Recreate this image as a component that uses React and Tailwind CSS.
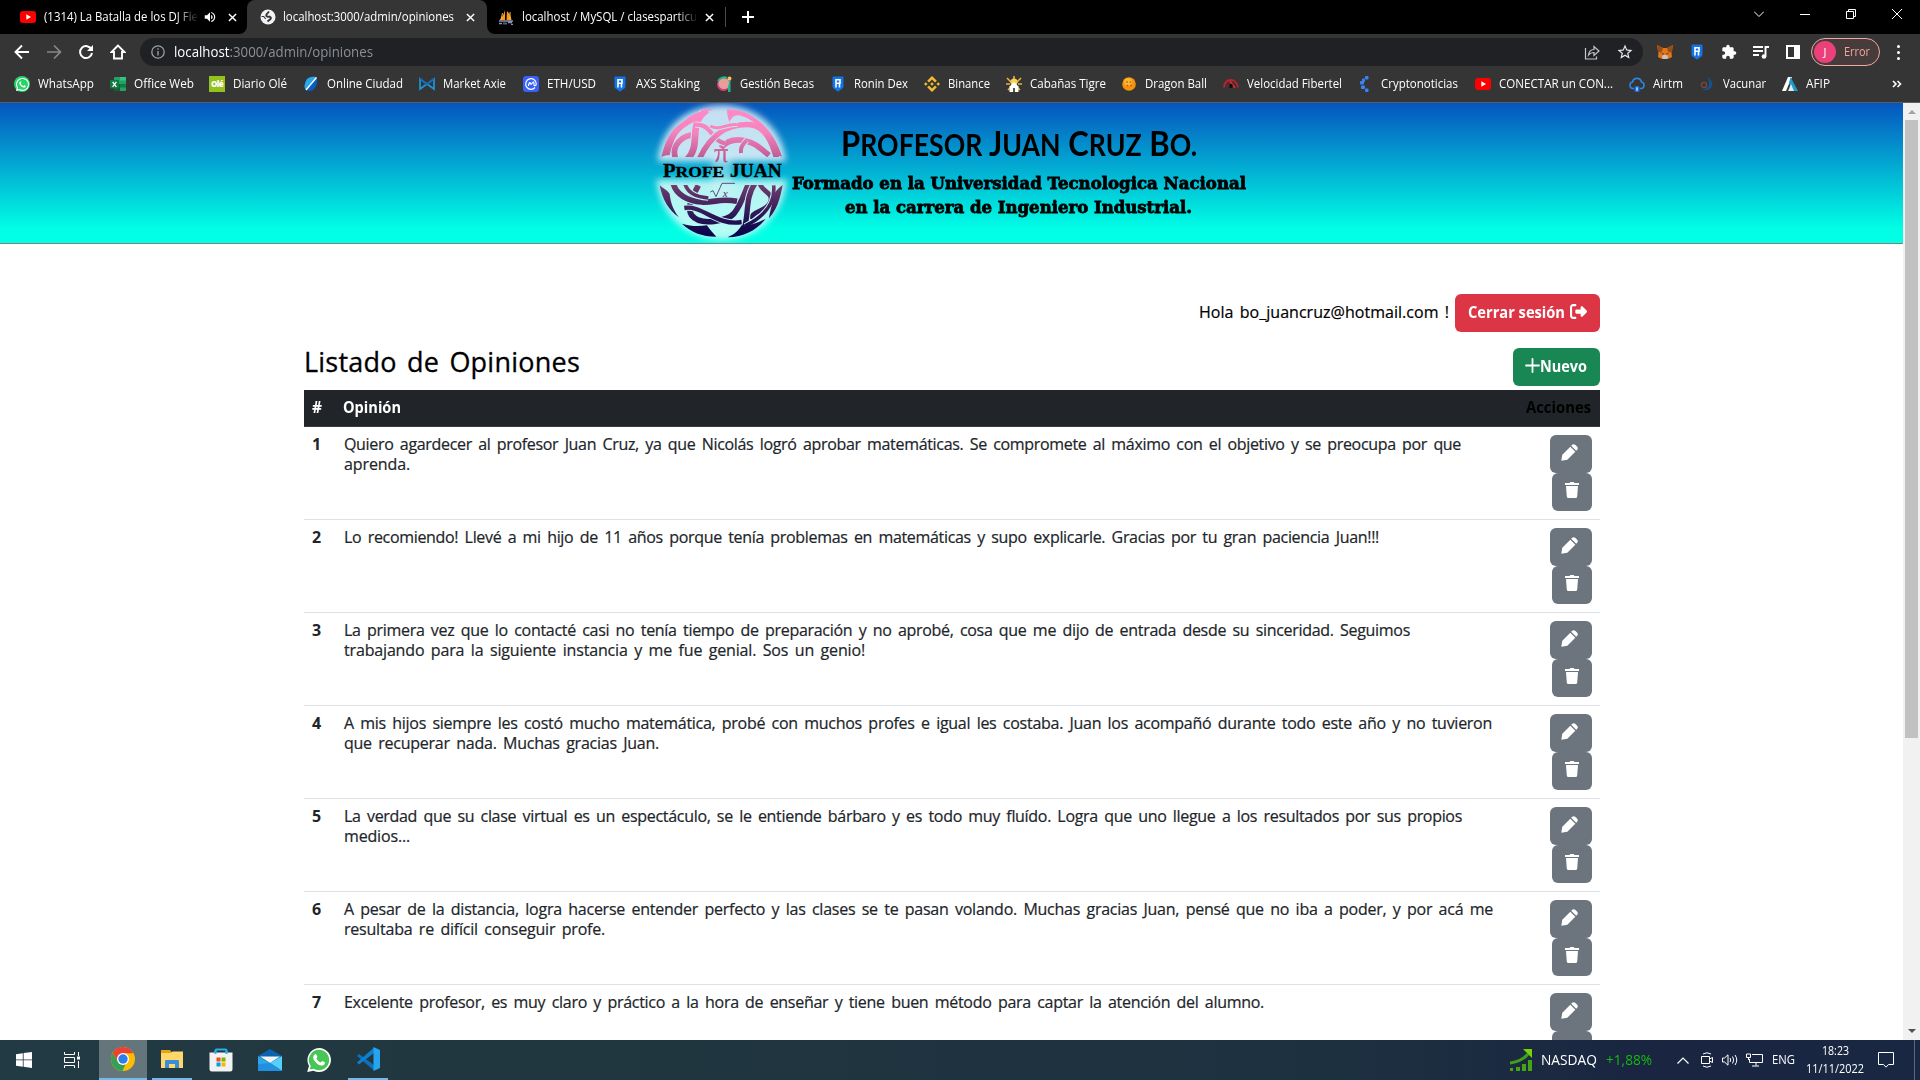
import React, { useLayoutEffect, useRef } from "react";
import { FaRightFromBracket, FaPlus } from "react-icons/fa6";
import { FaWhatsapp } from "react-icons/fa";
import { MdExtension, MdStarOutline, MdVolumeUp } from "react-icons/md";

/* Fits one line of text to the width of its box, by tracking or by horizontal scale. */
function Fit({ className = "", scale = false, children }) {
  const outer = useRef(null);
  const inner = useRef(null);
  useLayoutEffect(() => {
    const box = outer.current;
    const el = inner.current;
    const target = box.clientWidth;
    const natural = el.getBoundingClientRect().width;
    if (!natural) return;
    if (scale) {
      el.style.transform = `scaleX(${target / natural})`;
    } else {
      const n = el.textContent.length;
      el.style.letterSpacing = `${(target - natural) / n}px`;
    }
  }, [scale]);
  return (
    <span ref={outer} className={`block shrink-0 whitespace-nowrap ${className}`}>
      <span ref={inner} className="inline-block origin-left">{children}</span>
    </span>
  );
}

const UI = "font-['Open_Sans','Noto_Sans',sans-serif]";

/* ---------- small icons ---------- */
const YouTube = () => (
  <svg viewBox="0 0 16 16" className="h-4 w-4"><rect y="2" width="16" height="12" rx="3" fill="#f00" /><path d="M6.3 5.2 11 8l-4.7 2.8z" fill="#fff" /></svg>
);
const Globe = () => (
  <svg viewBox="0 0 16 16" className="h-4 w-4"><circle cx="8" cy="8" r="7.5" fill="#f1f3f4" /><path d="M9 2.500 6.500 5.500q-1 2 1.500 2.300h2q1.500.7.5 2.200L7.500 12.500" fill="none" stroke="#35363a" strokeWidth="1.900" /><path d="M1.500 7.500h2.200l2 2.500" fill="none" stroke="#35363a" strokeWidth="1.200" /></svg>
);
const Sails = () => (
  <svg viewBox="0 0 16 16" className="h-4 w-4"><path d="M7 1v10H1.500C4 8.500 6 5 7 1z" fill="#f89c0e" /><path d="M9 2c2.500 2.500 4 5.500 4.500 9H8.500z" fill="#f89c0e" /><path d="M4.500 4 3 11M12 3v8" stroke="#f8b84e" /><path d="M1 12h14M1 14.500h3m2-1v2m2-2v2m2-2h4m-1 2h2" stroke="#8c8fb5" strokeWidth="1.3" /></svg>
);
const Cross = () => (
  <svg viewBox="0 0 10 10" className="h-[9px] w-[9px] shrink-0"><path d="m1 1 8 8m0-8L1 9" stroke="#fff" strokeWidth="1.6" /></svg>
);
const Ronin = () => (
  <svg viewBox="0 0 16 16" className="h-4 w-4"><path d="M2.500 1.500Q2.500.5 3.500.5h9q1 0 1 1v9.300c0 1.500-3 3-5.500 4.900-2.500-1.900-5.500-3.400-5.500-4.900z" fill="#1273ea" /><path d="M6 11.500V3.700h4v3.600H6.500M9.500 7.500v4" fill="none" stroke="#fff" strokeWidth="1.6" /></svg>
);
const WhatsAppIcon = () => (
  <span className="flex h-4 w-4 items-center justify-center rounded-full bg-[#25d366]"><FaWhatsapp className="h-[15px] w-[15px] text-white" /></span>
);
const Excel = () => (
  <svg viewBox="0 0 16 16" className="h-4 w-4"><rect x="4" y="1" width="12" height="14" rx="1" fill="#21a366" /><path d="M10 1h6v3.500h-6z" fill="#33c481" /><path d="M4 8h6v7H5q-1 0-1-1z" fill="#185c37" /><path d="M10 8h6v3.500h-6z" fill="#107c41" /><rect y="4" width="9" height="8.500" rx="1" fill="#107c41" /><path d="m2.600 5.800 3.800 5m0-5-3.800 5" stroke="#fff" strokeWidth="1.300" /></svg>
);
const Ole = () => (
  <span className="flex h-4 w-4 items-center justify-center bg-[#95c11f] font-['Open_Sans',sans-serif] text-[8px] font-extrabold tracking-[-0.6px] text-white">Olé</span>
);
const Ciudad = () => (
  <svg viewBox="0 0 16 16" className="h-4 w-4"><path d="M8 1c4-1 7 1 6 6s-4 8-7 8-6-2-5-7 3-6 6-7z" fill="#0a5cc0" /><path d="M8 1c3-.8 5-.2 5.800 1L3 14C1 12 1.500 9 2 8c1-5 3-6 6-7z" fill="#29a9ea" /><path d="M13.500 1.500 3 14" stroke="#fff" strokeWidth="1.300" /></svg>
);
const Axie = () => (
  <svg viewBox="0 0 16 16" className="h-4 w-4"><path d="M1 3v10l7-5zM15 3v10L8 8z" fill="none" stroke="#1b96d8" strokeWidth="1.700" /><path d="m1 3 7 5 7-5" fill="none" stroke="#1265b8" strokeWidth="1.500" /></svg>
);
const Cmc = () => (
  <svg viewBox="0 0 16 16" className="h-4 w-4"><rect width="16" height="16" rx="3" fill="#3861fb" /><path d="M12 11.500a5.300 5.300 0 1 1 1.300-3.500c0 2-2.300 2.300-2.300.5 0-3-1-3-2.300-.8-.8 1.500-1.300 0-1.300-.7-.8-1-1.600.5-2 3" fill="none" stroke="#fff" strokeWidth="1.200" /></svg>
);
const Becas = () => (
  <svg viewBox="0 0 16 16" className="h-4 w-4"><circle cx="7.500" cy="8.500" r="6.500" fill="#d8407d" /><circle cx="8" cy="7.500" r="5.500" fill="#e79d9a" /><path d="M2 5a7 7 0 0 1 9-3" stroke="#1db58e" strokeWidth="2" fill="none" /><path d="M14 4v12h-1.500V12z" fill="#1db58e" stroke="#1db58e" /><circle cx="13.500" cy="2.500" r="2" fill="#f6c15b" /></svg>
);
const Binance = () => (
  <svg viewBox="0 0 16 16" className="h-4 w-4" fill="#f3ba2f"><path d="m8 0 4.800 4.800L11 6.600l-3-3-3 3-1.800-1.800zM8 16l4.800-4.800L11 9.400l-3 3-3-3-1.800 1.800zM1.800 6.200 3.600 8 1.800 9.800 0 8zM14.200 6.200 16 8l-1.800 1.800L12.400 8zM8 6.200 9.800 8 8 9.800 6.200 8z" /></svg>
);
const Cabanas = () => (
  <svg viewBox="0 0 16 16" className="h-4 w-4"><path d="M8 0v6M1 2l4 4M15 2l-4 4M0 8h4M16 8h-4M2 14l3-3M14 14l-3-3" stroke="#eab33a" strokeWidth="1.600" /><circle cx="8" cy="6" r="3.600" fill="#f4d35c" /><path d="m8 6 4.500 4.500V16h-9v-5.500z" fill="#fff" /><path d="M7 12h2v4H7z" fill="#554" /></svg>
);
const Dragon = () => (
  <svg viewBox="0 0 16 16" className="h-4 w-4"><circle cx="8" cy="8" r="6.800" fill="#f5930b" /><circle cx="7" cy="6" r="4" fill="#fbb531" /><g fill="#c2410c"><circle cx="6" cy="6" r=".8" /><circle cx="9.500" cy="6" r=".8" /><circle cx="6.500" cy="9.500" r=".8" /><circle cx="10" cy="9.500" r=".8" /></g></svg>
);
const Speed = () => (
  <svg viewBox="0 0 16 16" className="h-4 w-4" fill="none" stroke="#c8202c"><path d="M1 11.500C1 2.500 13 .5 15 11.500" strokeWidth="1.800" /><path d="M4.500 11c0-4 5.500-5 7.500 0" stroke="#8d1820" strokeWidth="1.300" /><path d="m7 5 5 7" stroke="#e02b35" strokeWidth="1.500" /><path d="M6.500 8h3v4h-3z" fill="#111" stroke="none" /></svg>
);
const Crypto = () => (
  <svg viewBox="0 0 16 16" className="h-4 w-4" fill="#3b82f6"><rect x="8" y="0" width="3.500" height="3.500" rx="1" /><rect x="5" y="2.500" width="3" height="3.500" rx="1" /><rect x="3" y="5" width="4" height="3.500" rx="1" /><rect x="4" y="9.500" width="4" height="3.500" rx="1" /><rect x="8" y="12.500" width="3.500" height="3.500" rx="1" /></svg>
);
const Airtm = () => (
  <svg viewBox="0 0 16 16" className="h-4 w-4"><path d="M5 12.500H4a3.300 3.300 0 0 1-.5-6.500 4.600 4.600 0 0 1 9 0 3.300 3.300 0 0 1-.5 6.500h-1" fill="none" stroke="#2a86e0" strokeWidth="1.600" /><rect x="5.500" y="10" width="5" height="6" rx="1.500" fill="#1d6fd8" /><path d="M8 11v4M7 13h2" stroke="#bfe0ff" /></svg>
);
const Vacunar = () => (
  <svg viewBox="0 0 16 16" className="h-4 w-4"><path d="M8 1c5 3 7 7 4 11-2.500 3-7 2.500-9 1 5 0 7-2 7-6 0-2-1-4-2-6z" fill="#15508f" /><circle cx="5" cy="9" r="2.600" fill="none" stroke="#7c4a3c" strokeWidth="1.300" /></svg>
);
const Afip = () => (
  <svg viewBox="0 0 16 16" className="h-4 w-4"><path d="M6 1h4L4 15H0z" fill="#fff" /><path d="m8.500 1 7.500 14h-5.500L7 7z" fill="#1f9ac9" /><path d="m9 8 3 7H6z" fill="#d8eef7" /></svg>
);
const Fox = () => (
  <svg viewBox="0 0 16 16" className="h-4 w-4"><path d="m0 1 6 3h4l6-3-1.500 8 .5 4-4 2H5l-4-2 .5-4z" fill="#e2761b" /><path d="m0 1 6 3-1.500 4.500L1 8zM16 1l-6 3 1.500 4.500L15 8z" fill="#9a4d18" /><path d="m5 13 1-2h4l1 2-1 2H6z" fill="#c9c3bd" /><path d="m4 9 2.500.5.5 1.500zM12 9l-2.500.5L9 11z" fill="#233447" /></svg>
);

const BOOKMARKS = [
  ["WhatsApp", WhatsAppIcon, "w-[96px]", "w-[56px]"],
  ["Office Web", Excel, "w-[99px]", "w-[60px]"],
  ["Diario Olé", Ole, "w-[94px]", "w-[54px]"],
  ["Online Ciudad", Ciudad, "w-[116px]", "w-[76px]"],
  ["Market Axie", Axie, "w-[104px]", "w-[63px]"],
  ["ETH/USD", Cmc, "w-[89px]", "w-[49px]"],
  ["AXS Staking", Ronin, "w-[104px]", "w-[64px]"],
  ["Gestión Becas", Becas, "w-[114px]", "w-[74px]"],
  ["Ronin Dex", Ronin, "w-[94px]", "w-[54px]"],
  ["Binance", Binance, "w-[82px]", "w-[42px]"],
  ["Cabañas Tigre", Cabanas, "w-[115px]", "w-[76px]"],
  ["Dragon Ball", Dragon, "w-[102px]", "w-[62px]"],
  ["Velocidad Fibertel", Speed, "w-[134px]", "w-[95px]"],
  ["Cryptonoticias", Crypto, "w-[118px]", "w-[77px]"],
  ["CONECTAR un CON...", YouTube, "w-[154px]", "w-[114px]"],
  ["Airtm", Airtm, "w-[70px]", "w-[30px]"],
  ["Vacunar", Vacunar, "w-[83px]", "w-[43px]"],
  ["AFIP", Afip, "w-[60px]", "w-[24px]"],
];

const ROWS = [
  [["Quiero agardecer al profesor Juan Cruz, ya que Nicolás logró aprobar matemáticas. Se compromete al máximo con el objetivo y se preocupa por que", "w-[1117px]"], ["aprenda.", "w-[66px]"]],
  [["Lo recomiendo! Llevé a mi hijo de 11 años porque tenía problemas en matemáticas y supo explicarle. Gracias por tu gran paciencia Juan!!!", "w-[1035px]"]],
  [["La primera vez que lo contacté casi no tenía tiempo de preparación y no aprobé, cosa que me dijo de entrada desde su sinceridad. Seguimos", "w-[1066px]"], ["trabajando para la siguiente instancia y me fue genial. Sos un genio!", "w-[521px]"]],
  [["A mis hijos siempre les costó mucho matemática, probé con muchos profes e igual les costaba. Juan los acompañó durante todo este año y no tuvieron", "w-[1148px]"], ["que recuperar nada. Muchas gracias Juan.", "w-[315px]"]],
  [["La verdad que su clase virtual es un espectáculo, se le entiende bárbaro y es todo muy fluído. Logra que uno llegue a los resultados por sus propios", "w-[1118px]"], ["medios...", "w-[66px]"]],
  [["A pesar de la distancia, logra hacerse entender perfecto y las clases se te pasan volando. Muchas gracias Juan, pensé que no iba a poder, y por acá me", "w-[1149px]"], ["resultaba re difícil conseguir profe.", "w-[261px]"]],
  [["Excelente profesor, es muy claro y práctico a la hora de enseñar y tiene buen método para captar la atención del alumno.", "w-[920px]"]],
];

function TabStrip() {
  return (
    <div className="flex h-[34px] items-center bg-black text-[12px] text-white">
      <div className="flex h-full w-[239px] items-center pl-5">
        <YouTube />
        <div className="ml-2 w-[155px] overflow-hidden [mask-image:linear-gradient(to_right,black_85%,transparent)]">
          <Fit scale className="w-[154px]">(1314) La Batalla de los DJ Fie</Fit>
        </div>
        <MdVolumeUp className="ml-1 h-[14px] w-[14px]" />
        <div className="ml-[11px]"><Cross /></div>
      </div>
      <div className="h-full w-2 bg-[#353535]"><div className="h-full w-full rounded-br-lg bg-black" /></div>
      <div className="flex h-full w-[240px] items-center rounded-t-lg bg-[#353535] pl-[13px]">
        <Globe />
        <Fit scale className="ml-[7px] w-[171px]">localhost:3000/admin/opiniones</Fit>
        <div className="ml-[12px]"><Cross /></div>
      </div>
      <div className="h-full w-2 bg-[#353535]"><div className="h-full w-full rounded-bl-lg bg-black" /></div>
      <div className="flex h-full w-[230px] items-center pl-[3px]">
        <Sails />
        <div className="ml-2 w-[176px] overflow-hidden [mask-image:linear-gradient(to_right,black_88%,transparent)]">
          <Fit scale className="w-[175px]">localhost / MySQL / clasesparticu</Fit>
        </div>
        <div className="ml-[7px]"><Cross /></div>
      </div>
      <div className="h-5 w-px bg-[#4a4a4a]" />
      <svg viewBox="0 0 12 12" className="ml-4 h-3 w-3"><path d="M6 0v12M0 6h12" stroke="#fff" strokeWidth="2" /></svg>
      <div className="mr-[18px] ml-auto flex items-center gap-9 pb-[6px]">
        <svg viewBox="0 0 10 10" className="h-[10px] w-[10px]"><path d="m0 2.500 5 5 5-5" stroke="#fff" fill="none" /></svg>
        <svg viewBox="0 0 10 10" className="h-[10px] w-[10px]"><path d="M0 5.500h10" stroke="#fff" /></svg>
        <svg viewBox="0 0 10 10" className="h-[10px] w-[10px]"><path d="M.5 2.500h7v7h-7zM2.500 2.500v-2h7v7h-2" stroke="#fff" fill="none" /></svg>
        <svg viewBox="0 0 10 10" className="h-[10px] w-[10px]"><path d="m0 0 10 10M10 0 0 10" stroke="#fff" /></svg>
      </div>
    </div>
  );
}

function Toolbar() {
  return (
    <div className="flex h-9 items-center bg-[#353535] pl-[14px] text-white">
      <svg viewBox="0 0 16 16" className="h-4 w-4"><path d="M15 8H2M8 1.500 1.500 8 8 14.500" stroke="#fff" strokeWidth="1.900" fill="none" /></svg>
      <svg viewBox="0 0 16 16" className="ml-4 h-4 w-4"><path d="M1 8h13M8 1.500 14.500 8 8 14.500" stroke="#888" strokeWidth="1.700" fill="none" /></svg>
      <svg viewBox="0 0 16 16" className="ml-4 h-4 w-4"><path d="M13.500 5.500A6 6 0 1 0 14 9" stroke="#fff" strokeWidth="2" fill="none" /><path d="M15 1v6H9z" fill="#fff" /></svg>
      <svg viewBox="0 0 16 16" className="ml-4 h-4 w-4"><path d="M8 1.500 1.500 8H4v6.500h8V8h2.500z" stroke="#fff" strokeWidth="1.900" fill="none" /></svg>
      <div className="ml-[14px] flex h-7 w-[1503px] items-center rounded-full bg-[#202124] pl-[11px]">
        <svg viewBox="0 0 14 14" className="h-[14px] w-[14px]"><circle cx="7" cy="7" r="6.200" fill="none" stroke="#9aa0a6" strokeWidth="1.300" /><path d="M7 6v4.500M7 3.300v1.500" stroke="#9aa0a6" strokeWidth="1.400" /></svg>
        <Fit scale className="ml-[9px] w-[199px] pb-px text-[14px] text-[#8b9095]"><span className="text-white">localhost</span>:3000/admin/opiniones</Fit>
        <svg viewBox="0 0 16 16" className="mr-4 ml-auto h-4 w-4"><path d="M1.500 4v11h11v-2.500" fill="none" stroke="#c8c8c8" strokeWidth="1.200" /><path d="M4.500 11c.5-4 2.500-5.500 5.500-5.500V2.500l5 4.500-5 4.500V8.500c-2.500 0-4 .5-5.500 2.500z" fill="none" stroke="#c8c8c8" strokeWidth="1.200" /></svg>
        <MdStarOutline className="mr-[9px] h-[18px] w-[18px] text-[#e8e8e8]" />
      </div>
      <div className="ml-[14px] flex items-center gap-4">
        <Fox />
        <Ronin />
        <MdExtension className="h-4 w-4" />
        <svg viewBox="0 0 16 16" className="h-4 w-4"><path d="M0 3h10M0 7h10M0 11h6" stroke="#fff" strokeWidth="1.900" /><path d="M12.500 12.500V3H16" fill="none" stroke="#fff" strokeWidth="1.900" /><circle cx="11" cy="12.500" r="2.300" fill="#fff" /></svg>
        <svg viewBox="0 0 16 16" className="h-4 w-4"><path d="M2 2h12v12H2z" fill="none" stroke="#fff" strokeWidth="2" /><path d="M9 2h5v12H9z" fill="#fff" /></svg>
      </div>
      <div className="ml-[10px] flex h-7 w-[69px] items-center rounded-full border border-[#f1a9a0] bg-[#453c3b] pl-0.5 text-[12px] text-[#f3a79f]">
        <span className="flex h-[22px] w-[22px] items-center justify-center rounded-full bg-[#ec407a] text-[11px] text-white">J</span>
        <Fit scale className="ml-2 w-[26px]">Error</Fit>
      </div>
      <div className="ml-[17px] flex flex-col gap-[3px]">
        <i className="h-[3px] w-[3px] rounded-full bg-white" /><i className="h-[3px] w-[3px] rounded-full bg-white" /><i className="h-[3px] w-[3px] rounded-full bg-white" />
      </div>
    </div>
  );
}

function Bookmarks() {
  return (
    <div className="flex h-[33px] items-center border-b border-[#5d5d5d] bg-[#353535] pb-[4px] pl-[14px] text-[12px] text-white">
      {BOOKMARKS.map(([label, Icon, box, text]) => (
        <div key={label} className={`flex shrink-0 items-center gap-2 ${box}`}>
          <span className="shrink-0"><Icon /></span>
          <Fit scale className={text}>{label}</Fit>
        </div>
      ))}
      <svg viewBox="0 0 10 10" className="mr-[18px] ml-auto h-[10px] w-[10px]"><path d="m1 2 3 3-3 3M5.500 2l3 3-3 3" fill="none" stroke="#fff" strokeWidth="1.600" /></svg>
    </div>
  );
}

/* A woven ribbon: a pale edge under a coloured band, so crossings read as over and under. */
function Band({ d, w, edge, ink }) {
  return (
    <g fill="none">
      <path d={d} stroke={edge} strokeWidth={w + 6} />
      <path d={d} stroke={`url(#${ink})`} strokeWidth={w} />
    </g>
  );
}

function Logo() {
  return (
    <svg viewBox="0 15 450 420" className="h-[140px] w-[150px] shrink-0">
      <defs>
        <linearGradient id="pink" gradientUnits="userSpaceOnUse" x1="0" y1="30" x2="0" y2="195"><stop offset="0" stopColor="#ff8ac8" /><stop offset=".45" stopColor="#f583bd" /><stop offset="1" stopColor="#b0548c" /></linearGradient>
        <linearGradient id="plum" gradientUnits="userSpaceOnUse" x1="0" y1="255" x2="0" y2="420"><stop offset="0" stopColor="#74406f" /><stop offset=".6" stopColor="#2a1655" /><stop offset="1" stopColor="#04004a" /></linearGradient>
        <filter id="glow" x="-20%" y="-20%" width="140%" height="140%"><feGaussianBlur stdDeviation="9" /></filter>
        <clipPath id="upper"><path d="M40 178C55 85 130 28 230 28s172 60 184 150z" /></clipPath>
        <clipPath id="lower"><path d="M40 261h376C405 350 340 420 230 420S52 350 40 261z" /></clipPath>
      </defs>
      <g filter="url(#glow)">
        <path d="M38 190C45 95 120 22 230 22s185 75 192 168z" fill="#d9edf7" fillOpacity=".9" />
        <path d="M34 245h392C415 345 345 425 232 425S45 345 34 245z" fill="#d5fbf8" fillOpacity=".85" />
        <path d="M200 170h60v130h-60z" fill="#cfeff5" fillOpacity=".5" />
      </g>
      <g clipPath="url(#upper)">
        <Band d="M228 150C245 128 270 122 300 128S345 150 372 172" w={17} edge="#c9e2f0" ink="pink" />
        <Band d="M92 182C78 145 108 108 158 110" w={17} edge="#c9e2f0" ink="pink" />
        <Band d="M127 184C172 140 125 78 186 36" w={20} edge="#c9e2f0" ink="pink" />
        <Band d="M150 80C205 78 195 128 240 136" w={13} edge="#c9e2f0" ink="pink" />
        <Band d="M160 190C200 95 265 76 318 80C362 88 382 130 396 186" w={17} edge="#c9e2f0" ink="pink" />
        <Band d="M288 165C285 148 292 138 306 126" w={12} edge="#c9e2f0" ink="pink" />
        <Band d="M196 84C226 100 240 76 278 80" w={9} edge="#c9e2f0" ink="pink" />
      </g>
      <g fill="url(#pink)">
        <path d="M49 177C62 122 80 96 106 77C132 62 135 42 215 30C175 42 165 56 142 74C108 92 88 108 74 172C64 171 58 173 49 177z" />
        <path d="M246 34c36 0 57 8 89 30 38 28 62 65 76 112-10-4-18-3-24-2-4-38-22-62-48-90-24-22-40-28-58-32-14-2-22 8-28 20-4-12-8-26-7-38z" />
        <path d="M208 153h41v6h-7v26c0 5 4 5 7 3-3 8-14 7-14-2v-27h-11c0 14-1 26-6 31-5 5-10 0-5-5 5-5 6-15 6-26-6 0-8 1-11 5z" />
      </g>
      <g clipPath="url(#lower)">
        <Band d="M160 262C140 300 125 330 140 352C165 385 250 370 268 345C290 318 300 280 314 250" w={17} edge="#bdf3f3" ink="plum" />
        <Band d="M84 254C92 290 130 310 170 312S225 300 276 310" w={17} edge="#bdf3f3" ink="plum" />
        <Band d="M345 254C345 280 388 282 376 312S325 335 316 362" w={14} edge="#bdf3f3" ink="plum" />
        <Band d="M118 330C170 320 215 385 290 372" w={13} edge="#bdf3f3" ink="plum" />
        <Band d="M330 256C300 300 312 345 298 392" w={16} edge="#bdf3f3" ink="plum" />
        <Band d="M386 262C392 320 350 360 300 384" w={11} edge="#bdf3f3" ink="plum" />
        <Band d="M118 252C126 284 150 296 190 300" w={11} edge="#bdf3f3" ink="plum" />
      </g>
      <g fill="url(#plum)">
        <path d="M44 262c15 12 26 18 30 26 3 27 11 49 28 70-31-21-50-54-58-96z" />
        <path d="M413 261c-11 57-20 74-41 100 4-28 11-44 12-63 4-14 12-24 29-37z" />
        <path d="M111 377c26 8 50 8 75 5 8 12 17 22 28 34-43 0-77-14-103-39z" />
        <path d="M248 418c20-9 32-19 42-36 25 2 45-6 72-20-23 32-64 56-114 56z" />
      </g>
      <path d="m196 282 8-4 9 18 18-40h39" fill="none" stroke="#3a3662" strokeWidth="2.500" />
      <text x="233" y="297" fill="#4b3a70" className="font-['Liberation_Serif',serif] text-[34px] italic">x</text>
      <g fill="#000" stroke="#000" strokeWidth="1" className="font-['Liberation_Serif',serif] font-bold">
        <text x="54" y="237" textLength="184" lengthAdjust="spacingAndGlyphs" className="text-[54px]">P<tspan className="text-[46px]">ROFE</tspan></text>
        <text x="255" y="237" textLength="155" lengthAdjust="spacingAndGlyphs" className="text-[54px]">JUAN</text>
      </g>
    </svg>
  );
}

function Hero() {
  return (
    <header className="flex h-[141px] border-b border-[#808080] bg-[linear-gradient(to_bottom,#0655bf_0%,#00ffe5_90%)] pl-[645px] text-black">
      <Logo />
      <div className="-ml-[3px] flex w-[453px] flex-col items-center pt-[15px]">
        <Fit scale className="h-12 w-[356px] font-[Lato,sans-serif] text-[35px] leading-[48px] font-bold">
          P<span className="text-[30px]">ROFESOR</span> J<span className="text-[30px]">UAN</span> C<span className="text-[30px]">RUZ</span> B<span className="text-[30px]">O.</span>
        </Fit>
        <Fit scale className="mt-[5px] h-6 w-[454px] font-['DejaVu_Serif',serif] text-[17px] leading-6 font-bold [-webkit-text-stroke:0.8px_black]">Formado en la Universidad Tecnologica Nacional</Fit>
        <Fit scale className="h-6 w-[347px] font-['DejaVu_Serif',serif] text-[17px] leading-6 font-bold [-webkit-text-stroke:0.8px_black]">en la carrera de Ingeniero Industrial.</Fit>
      </div>
    </header>
  );
}

function Row({ n, lines }) {
  return (
    <div className="flex h-[93px] shrink-0 border-b border-[#dee2e6] pt-[7px] text-[#212529]">
      <div className="w-[40px] pl-2 leading-5 font-bold">{n}</div>
      <div className="flex-1 font-medium [word-spacing:2.5px] [-webkit-text-stroke:0.2px_#212529]">
        {lines.map(([t, w]) => <Fit key={t} className={`h-5 leading-5 ${w}`}>{t}</Fit>)}
      </div>
      <div className="mt-px mr-2 flex flex-col items-end">
        <div className="flex h-[38px] w-[42px] items-center justify-center rounded-md bg-[#6c757d] pr-1 pb-[4px] text-white">
          <svg viewBox="0 0 17 17" className="h-[17px] w-[17px]" fill="#fff"><path d="m1.300 10.700 8-8 5 5-8 8L.3 16.800z" /><path d="m10.200 1.800 1-1q1.500-1.300 3 0l2 2q1.200 1.500 0 3l-1 1z" /></svg>
        </div>
        <div className="flex h-[38px] w-10 items-center justify-center rounded-md bg-[#6c757d] pb-1 text-white">
          <svg viewBox="0 0 14 16" className="h-4 w-[14px]" fill="#fff"><path d="M0 1h4.500l.8-1h3.400l.8 1H14v2H0zM1 4h12l-.8 10.500Q12 16 10.700 16H3.300Q2 16 1.800 14.500z" /></svg>
        </div>
      </div>
    </div>
  );
}

function Page() {
  return (
    <div className="flex h-[937px] overflow-hidden bg-white">
      <div className="w-[1903px] shrink-0 text-[16px]">
        <Hero />
        <main className="ml-[304px] flex w-[1296px] flex-col pt-[50px]">
          <div className="flex h-[38px] items-center justify-end font-medium text-black">
            <Fit className="mr-[6px] w-[250px] pb-[3px] [word-spacing:2px] [-webkit-text-stroke:0.2px_black]">Hola bo_juancruz@hotmail.com !</Fit>
            <div className="flex h-[38px] w-[145px] items-center rounded-md bg-[#dc3545] pb-[3px] pl-[13px] font-bold text-white">
              <Fit scale className="w-[97px]">Cerrar sesión</Fit>
              <FaRightFromBracket className="ml-[5px] h-[17px] w-[17px]" />
            </div>
          </div>
          <div className="mt-4 flex h-[42px] items-start justify-between">
            <Fit className="w-[276px] text-[27px] leading-[28px] font-medium text-black [word-spacing:3px] [-webkit-text-stroke:0.3px_black]">Listado de Opiniones</Fit>
            <div className="flex h-[38px] w-[87px] items-center rounded-md bg-[#198754] pb-[3px] pl-3 font-bold text-white">
              <svg viewBox="0 0 15 15" className="h-[15px] w-[15px]"><path d="M7.500 1v13M1 7.500h13" stroke="#fff" strokeWidth="1.800" strokeLinecap="round" /></svg>
              <Fit scale className="w-[47px]">Nuevo</Fit>
            </div>
          </div>
          <div className="flex h-[37px] items-center border-b border-[#373b3e] bg-[#212529] pb-[3px] font-bold text-white">
            <Fit scale className="ml-2 w-[10px]">#</Fit>
            <Fit scale className="ml-[21px] w-[58px]">Opinión</Fit>
            <Fit scale className="mr-[9px] ml-auto w-[65px] text-black">Acciones</Fit>
          </div>
          {ROWS.map((lines, i) => <Row key={i} n={i + 1} lines={lines} />)}
        </main>
      </div>
      <div className="flex w-[17px] flex-col items-center justify-between bg-[#f1f1f1]">
        <div className="flex flex-col items-center">
          <svg viewBox="0 0 8 4" className="mt-[7px] mb-[6px] h-1 w-2"><path d="m4 0 4 4H0z" fill="#a3a3a3" /></svg>
          <div className="h-[618px] w-[13px] bg-[#c1c1c1]" />
        </div>
        <svg viewBox="0 0 8 4" className="mb-[7px] h-1 w-2"><path d="m4 4 4-4H0z" fill="#505050" /></svg>
      </div>
    </div>
  );
}

function Taskbar() {
  return (
    <div className="flex h-10 items-center bg-[linear-gradient(to_right,#223a43_0%,#20363f_35%,#1d3040_70%,#1a2641_85%,#1a2742_100%)] text-[12px] text-white">
      <svg viewBox="0 0 16 16" className="ml-4 h-4 w-4" fill="#fff"><path d="m0 2.200 6.800-1v6.300H0zM7.600 1.100 16 0v7.500H7.600zM0 8.300h6.800v6.400L0 13.800zM7.600 8.300H16V16l-8.400-1.200z" /></svg>
      <svg viewBox="0 0 16 16" className="ml-8 h-4 w-4"><path d="M.5 0v2.500h10V0M.5 16v-2.500h10V16M.5 5.500h10v5H.5zM14.500 0v4M14.500 9v7" fill="none" stroke="#fff" /><path d="M13 4.500h3v3h-3z" fill="#fff" /></svg>
      <div className="ml-[19px] flex h-10 w-12 items-center justify-center border-b-2 border-[#76b9ed] bg-[#64757b]">
        <svg viewBox="0 0 24 24" className="h-6 w-6"><circle cx="12" cy="12" r="12" fill="#fbbc04" /><path d="M1.600 6A12 12 0 0 1 22.400 6.200H12L7 15z" fill="#ea4335" /><path d="M1.600 6 7 15l5 2.500 2.500-.5L11.500 24A12 12 0 0 1 1.600 6z" fill="#34a053" /><circle cx="12" cy="12" r="6" fill="#fff" /><circle cx="12" cy="12" r="4.700" fill="#2f7de9" /></svg>
      </div>
      <div className="ml-[5px] flex h-10 w-10 items-center justify-center border-b-2 border-[#76b9ed]">
        <svg viewBox="0 0 22 18" className="h-[18px] w-[22px]"><path d="M0 0h9l1.500 2H22v16H0z" fill="#e8a317" /><path d="M0 3h10l1.500-1.500H22V18H0z" fill="#ffd76b" /><path d="M4 11q0-1 1-1h12q1 0 1 1v7h-4v-4H8v4H4z" fill="#3a8dd6" /></svg>
      </div>
      <svg viewBox="0 0 24 24" className="ml-[17px] h-6 w-6"><path d="M6.500 6V2.500q0-1 1-1h9q1 0 1 1V6" fill="none" stroke="#28aee8" strokeWidth="2" /><path d="M.5 4.500h23V21q0 2.500-2.500 2.500H3Q.5 23.500.5 21z" fill="#f2f2f2" /><path d="M6.500 2.500v3.500M17.500 2.500v3.500" stroke="#28aee8" strokeWidth="2" /><path d="M7.500 9.500h4v4h-4z" fill="#f04e1f" /><path d="M12.500 9.500h4v4h-4z" fill="#7db700" /><path d="M7.500 14.500h4v4h-4z" fill="#00a1ec" /><path d="M12.500 14.500h4v4h-4z" fill="#fdb500" /></svg>
      <svg viewBox="0 0 24 24" className="ml-[25px] h-6 w-6"><path d="m0 8 12-7 12 7v15H0z" fill="#0a64b0" /><path d="M2 8.500h20L12 15z" fill="#f3f3f3" /><path d="m0 8 24 14.500V23H0z" fill="#2ba8e8" /><path d="M24 8v14.500L12 15z" fill="#55d0f8" /><path d="M0 23V16l12-1 12 8z" fill="#2190e0" /></svg>
      <svg viewBox="0 0 24 24" className="ml-[25px] h-6 w-6"><path d="M12 0a12 12 0 1 1-5.500 22.700L.2 24 2 18A12 12 0 0 1 12 0z" fill="#fff" /><path d="M12 1.800a10.200 10.200 0 1 1-5.200 19L2.600 21.500 3.800 18A10.200 10.200 0 0 1 12 1.800z" fill="#45c655" /><path d="M7.500 6.500c1-.8 1.600-.6 2 .3l.8 2c.2.600-.9 1.400-.9 1.800 1 2 2.300 3 4.200 3.800.5 0 1.200-1.500 1.800-1.400l2.400 1.200c.5.300-.2 2.600-1.600 3.100-3 1-6-1-8-3.500-2.500-3-2.600-5.500-.7-7.300z" fill="#fff" /></svg>
      <div className="ml-[17px] flex h-10 w-10 items-center justify-center border-b-2 border-[#76b9ed]">
        <svg viewBox="0 0 24 24" className="h-6 w-6"><path d="m1 9 2-2 15 11v5.500L1 9z" fill="#0e70b8" /><path d="m1 15.500 2 2L18 6V.5z" fill="#0b80cf" /><path d="M17.500 0 24 3v18l-6.500 3z" fill="#27a4f0" /></svg>
      </div>
      <div className="mr-[5px] ml-auto flex h-10 items-center">
        <svg viewBox="0 0 22 22" className="h-[22px] w-[22px]"><path d="M0 22v-3h3v3zM6 22v-4h4v4zM12 22v-7h4v7zM18 22V11h4v11z" fill="#46a312" /><path d="M0 14c8-1 13-3 18-9" fill="none" stroke="#3fa01c" strokeWidth="3" /><path d="M13 0h9v9z" fill="#74d10c" /></svg>
        <Fit scale className="ml-[9px] w-[56px] pb-px text-[14px]">NASDAQ</Fit>
        <Fit scale className="ml-[9px] w-[46px] pb-px text-[14px] text-[#13b90f]">+1,88%</Fit>
        <svg viewBox="0 0 12 7" className="ml-[25px] h-[7px] w-3"><path d="m.5 6.500 5.500-5.500 5.500 5.500" fill="none" stroke="#fff" strokeWidth="1.200" /></svg>
        <svg viewBox="0 0 12 16" className="ml-[12px] h-4 w-3" fill="none" stroke="#fff"><path d="M2 2q4-2.500 8 0M2 14q4 2.500 8 0M.5 4.500h8v7h-8zM8.500 7l3-1.500v5l-3-1.500" /></svg>
        <svg viewBox="0 0 16 12" className="ml-[9px] h-3 w-4" fill="none" stroke="#fff"><path d="M.5 4h2L6 .8v10.400L2.500 8h-2zM8 4q1.500 2 0 4M10.500 2.500q2.500 3.500 0 7M13 1q3.500 5 0 10" /></svg>
        <svg viewBox="0 0 17 14" className="ml-2 h-[14px] w-[17px]" fill="none" stroke="#fff"><path d="M6 1.500h10.500v8H3.500V6M10 9.500v3M6 13h7M.5 1h4v3.500h-4zM2.500 4.500V7" /></svg>
        <Fit scale className="ml-[9px] w-[23px] pb-px">ENG</Fit>
        <div className="ml-[11px] flex w-[58px] flex-col items-center">
          <Fit scale className="h-[18px] w-[27px] leading-[18px]">18:23</Fit>
          <Fit scale className="h-[18px] w-[58px] leading-[18px]">11/11/2022</Fit>
        </div>
        <svg viewBox="0 0 16 16" className="ml-[14px] h-4 w-4"><path d="M.5.500h15v12h-5L8 15.200 5.500 12.500h-5z" fill="none" stroke="#fff" /></svg>
        <div className="ml-5 h-10 w-px bg-[#5d6a7e]" />
      </div>
    </div>
  );
}

export default function App() {
  return (
    <div className={`flex h-[1080px] w-[1920px] flex-col overflow-hidden bg-white ${UI}`}>
      <TabStrip />
      <Toolbar />
      <Bookmarks />
      <Page />
      <Taskbar />
    </div>
  );
}
